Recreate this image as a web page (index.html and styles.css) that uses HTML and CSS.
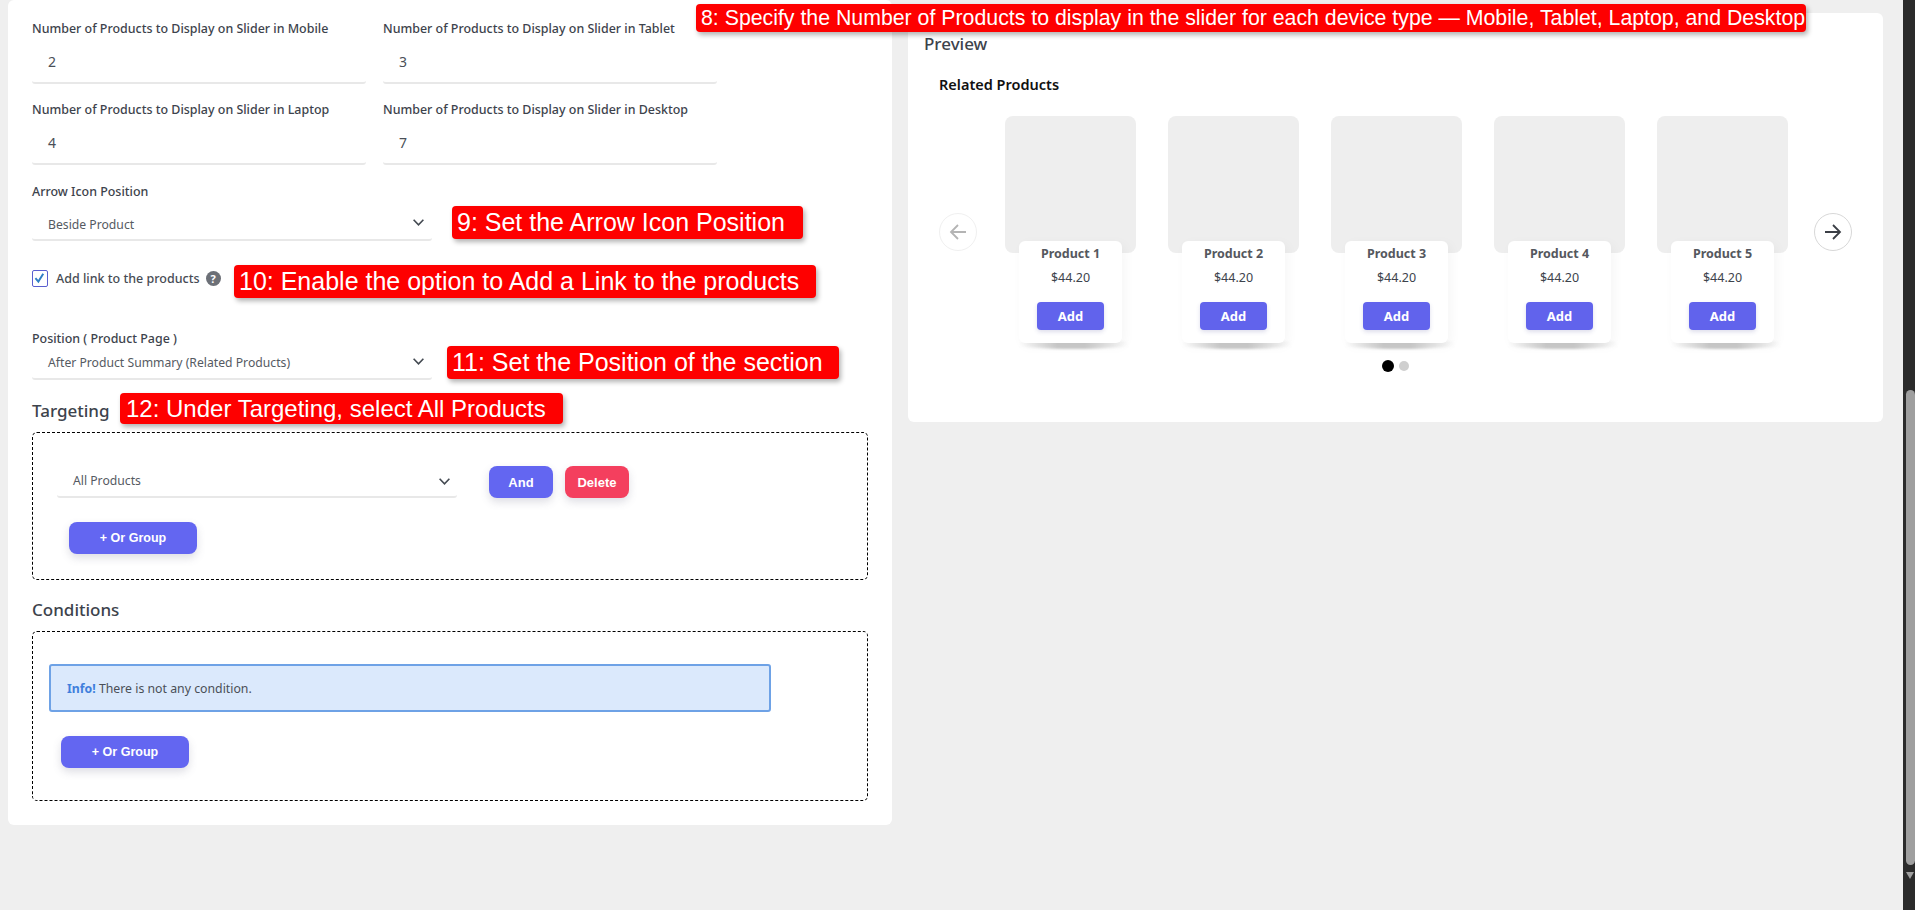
FILE: index.html
```html
<!DOCTYPE html>
<html lang="en">
<head>
<meta charset="utf-8">
<title>Related Products</title>
<link rel="stylesheet" href="styles.css">
</head>
<body>
<div class="app">
  <main class="content">
    <section class="card form-card">
      <div class="grid-two">
        <div class="field"><label class="label">Number of Products to Display on Slider in Mobile</label><div class="input">2</div></div>
        <div class="field"><label class="label">Number of Products to Display on Slider in Tablet</label><div class="input">3</div></div>
        <div class="field"><label class="label">Number of Products to Display on Slider in Laptop</label><div class="input">4</div></div>
        <div class="field"><label class="label">Number of Products to Display on Slider in Desktop</label><div class="input">7</div></div>
      </div>
      <div class="field arrow-field">
        <label class="label">Arrow Icon Position</label>
        <div class="select select-tall"><span>Beside Product</span>
          <svg class="chev" viewBox="0 0 12 8"><path d="M1.5 1.5 6 6.2l4.5-4.7"/></svg></div>
      </div>
      <div class="check-row">
        <span class="checkbox"><svg viewBox="0 0 16 16"><path d="M3 8.2 6.6 12.4 12.6 2.8"/></svg></span>
        <span class="check-label">Add link to the products</span>
        <span class="help">?</span>
      </div>
      <div class="field position-field">
        <label class="label">Position ( Product Page )</label>
        <div class="select"><span>After Product Summary (Related Products)</span>
          <svg class="chev" viewBox="0 0 12 8"><path d="M1.5 1.5 6 6.2l4.5-4.7"/></svg></div>
      </div>
      <h2 class="heading targeting-heading">Targeting</h2>
      <div class="dash-box target-box">
        <div class="rule-row">
          <div class="select rule-select"><span>All Products</span>
            <svg class="chev" viewBox="0 0 12 8"><path d="M1.5 1.5 6 6.2l4.5-4.7"/></svg></div>
          <button class="btn btn-and">And</button>
          <button class="btn btn-delete">Delete</button>
        </div>
        <button class="btn btn-or target-or">+ Or Group</button>
      </div>
      <h2 class="heading conditions-heading">Conditions</h2>
      <div class="dash-box cond-box">
        <div class="info"><strong>Info!</strong> There is not any condition.</div>
        <button class="btn btn-or cond-or">+ Or Group</button>
      </div>
    </section>

    <section class="card preview-card">
      <h2 class="heading preview-title">Preview</h2>
      <h3 class="related-title">Related Products</h3>
      <div class="carousel">
        <span class="nav nav-prev"><svg viewBox="0 0 24 24"><path d="M20 12H5M12 5l-7 7 7 7"/></svg></span>
        <div class="track">
          <article class="product"><div class="thumb"></div><div class="info-card"><h4>Product 1</h4><p>$44.20</p><button class="add">Add</button></div></article>
          <article class="product"><div class="thumb"></div><div class="info-card"><h4>Product 2</h4><p>$44.20</p><button class="add">Add</button></div></article>
          <article class="product"><div class="thumb"></div><div class="info-card"><h4>Product 3</h4><p>$44.20</p><button class="add">Add</button></div></article>
          <article class="product"><div class="thumb"></div><div class="info-card"><h4>Product 4</h4><p>$44.20</p><button class="add">Add</button></div></article>
          <article class="product"><div class="thumb"></div><div class="info-card"><h4>Product 5</h4><p>$44.20</p><button class="add">Add</button></div></article>
        </div>
        <span class="nav nav-next"><svg viewBox="0 0 24 24"><path d="M4 12h15M12 5l7 7-7 7"/></svg></span>
      </div>
      <div class="dots"><span class="dot dot-on"></span><span class="dot"></span></div>
    </section>
  </main>
  <div class="scrollbar"><span class="thumb-bar"></span><span class="arrow-down"></span></div>

  <div class="callout c8">8: Specify the Number of Products to display in the slider for each device type — Mobile, Tablet, Laptop, and Desktop</div>
  <div class="callout c9">9: Set the Arrow Icon Position</div>
  <div class="callout c10">10: Enable the option to Add a Link to the products</div>
  <div class="callout c11">11: Set the Position of the section</div>
  <div class="callout c12">12: Under Targeting, select All Products</div>
</div>
</body>
</html>
```
FILE: styles.css
```css
* { box-sizing: border-box; }
html, body { margin: 0; height: 100%; overflow: hidden; }
body { font-family: "Noto Sans", "Open Sans", sans-serif; color: #3d434c; background: #efefef; }
.app { position: relative; display: flex; width: 1915px; height: 910px; overflow: hidden; }
.content { flex: 1; display: flex; align-items: flex-start; gap: 16px; padding-left: 8px; }

.card { background: #fff; border-radius: 6px; }
.form-card { width: 884px; height: 825px; padding: 20px 24px 0; }
.preview-card { width: 975px; height: 409px; margin-top: 13px; padding: 19px 17px 0 16px; }

.grid-two { display: grid; grid-template-columns: 334px 334px; column-gap: 17px; row-gap: 17px; }
.label { display: block; height: 18px; font-size: 12.45px; font-weight: 500; line-height: 18px; color: #3d434c; }
.input { height: 46px; padding: 14px 16px 0; font-size: 14px; line-height: 20px; color: #4a4f57; border-bottom: 2px solid #e8e8e8; border-radius: 0 0 3px 3px; }

.arrow-field { margin-top: 18px; width: 400px; }
.select { position: relative; height: 32px; padding: 6px 16px 0; font-size: 12.2px; line-height: 18px; color: #555a62; border-bottom: 2px solid #e8e8e8; border-radius: 0 0 3px 3px; }
.select-tall { height: 40px; padding-top: 15px; }
.chev { position: absolute; right: 7px; bottom: 12px; width: 13px; height: 9px; fill: none; stroke: #444a52; stroke-width: 1.5; }

.check-row { display: flex; align-items: center; height: 17px; margin-top: 29px; }
.checkbox { flex: none; width: 16px; height: 17px; border: 1.5px solid #5a5fd0; border-radius: 2px; }
.checkbox svg { display: block; width: 13px; height: 14px; fill: none; stroke: #2f7fc4; stroke-width: 2.4; }
.check-label { margin-left: 8px; font-size: 12.5px; font-weight: 500; line-height: 17px; color: #474c54; }
.help { display: flex; align-items: center; justify-content: center; width: 15px; height: 15px; margin-left: 6px; font-size: 11px; font-weight: 700; line-height: 15px; color: #fff; background: #6c7077; border-radius: 50%; }

.position-field { margin-top: 43px; width: 400px; }

.heading { margin: 0; font-size: 17px; font-weight: 500; line-height: 22px; color: #3d434c; }
.targeting-heading { margin-top: 20px; }
.conditions-heading { margin-top: 19px; }
.dash-box { width: 836px; border: 1px dashed #000; border-radius: 5px; }
.target-box { height: 148px; margin-top: 10px; padding: 33px 0 0 24px; }
.cond-box { height: 170px; margin-top: 10px; padding: 32px 0 0 16px; }

.rule-row { display: flex; align-items: flex-start; }
.rule-select { width: 400px; height: 32px; padding: 6px 16px 0; }
.rule-select .chev { bottom: 10px; right: 6px; }
.btn { display: block; border: 0; color: #fff; font-family: "Liberation Sans", Arial, sans-serif; font-size: 13px; font-weight: 700; border-radius: 8px; box-shadow: 0 4px 8px rgba(90, 90, 120, .2); }
.btn-and { width: 64px; height: 32px; margin-left: 32px; background: #6366f1; }
.btn-delete { width: 64px; height: 32px; margin-left: 12px; background: #f43f5e; }
.btn-or { width: 128px; height: 32px; font-size: 12.5px; background: #6366f1; }
.target-or { margin: 24px 0 0 12px; }
.cond-or { margin: 24px 0 0 12px; }

.info { width: 722px; height: 48px; padding: 0 16px; font-size: 12.3px; line-height: 46px; color: #4a4f57; background: #dbe9fc; border: 2px solid #6ea2e6; border-radius: 3px; }
.info strong { color: #3f7fdc; font-weight: 700; }

.preview-title { line-height: 24px; }
.related-title { margin: 18px 0 0 15px; font-size: 14.5px; font-weight: 600; line-height: 20px; color: #111; }
.carousel { display: flex; align-items: flex-start; margin: 22px 0 0 15px; }
.nav { flex: none; display: flex; align-items: center; justify-content: center; width: 38px; height: 38px; margin-top: 97px; background: #fff; border-radius: 50%; }
.nav svg { width: 24px; height: 24px; fill: none; stroke-width: 1.8; }
.nav-prev { border: 1px solid #f0f0f0; }
.nav-prev svg { stroke: #b4b4b4; }
.nav-next { margin-left: 26px; border: 1px solid #d8d8d8; }
.nav-next svg { stroke: #3b3f46; }
.track { display: flex; gap: 32px; margin-left: 28px; isolation: isolate; }
.product { width: 131px; display: flex; flex-direction: column; align-items: center; }
.thumb { width: 131px; height: 137px; background: #eeeeee; border-radius: 8px; }
.info-card { position: relative; width: 103px; height: 102px; margin-top: -12px; padding-top: 4px; text-align: center; background: #fff; border-radius: 6px; box-shadow: 3px 3px 12px rgba(0, 0, 0, .04); }
.info-card::after { content: ""; position: absolute; z-index: -1; left: 0; right: -7px; top: calc(100% - 2px); height: 8px; background: linear-gradient(90deg, #fff, #cacaca 35%, #cacaca 60%, #fff); border-radius: 0 0 50% 50%; filter: blur(1px); }
.info-card h4 { margin: 0; font-size: 12.5px; font-weight: 700; line-height: 18px; color: #55585e; }
.info-card p { margin: 6px 0 0; font-size: 12.5px; font-weight: 400; line-height: 18px; color: #3d434c; }
.add { display: block; width: 67px; height: 28px; margin: 15px auto 0; padding: 0; font-family: "Noto Sans", sans-serif; font-size: 13px; font-weight: 700; color: #fff; background: #6163ec; border: 0; border-radius: 4px; box-shadow: 0 2px 4px rgba(90, 90, 160, .2); }
.dots { display: flex; align-items: center; justify-content: center; gap: 5px; margin: 17px 0 0 1px; height: 12px; }
.dot { width: 10px; height: 10px; background: #cfcfcf; border-radius: 50%; }
.dot-on { width: 12px; height: 12px; background: #000; }

.scrollbar { position: relative; flex: none; width: 12px; height: 910px; background: #2b2b2b; }
.thumb-bar { position: absolute; left: 3px; right: 0; top: 390px; height: 475px; background: #9f9f9f; border-radius: 5px; }
.arrow-down { position: absolute; left: 3px; top: 872px; border-left: 4.5px solid transparent; border-right: 4.5px solid transparent; border-top: 7px solid #9f9f9f; }

.callout { position: absolute; display: flex; align-items: center; padding-left: 5px; font-family: "Liberation Sans", Arial, sans-serif; color: #fff; white-space: nowrap; background: #fe0000; border-radius: 4px; box-shadow: 2px 3px 5px rgba(0, 0, 0, .3); }
.c8 { left: 696px; top: 4px; width: 1110px; height: 28px; font-size: 21.3px; }
.c9 { left: 452px; top: 206px; width: 351px; height: 33px; font-size: 25px; }
.c10 { left: 234px; top: 265px; width: 582px; height: 33px; font-size: 25px; }
.c11 { left: 447px; top: 346px; width: 392px; height: 33px; font-size: 25px; }
.c12 { left: 120px; top: 393px; width: 443px; height: 31px; padding-left: 6px; font-size: 24px; }
```
